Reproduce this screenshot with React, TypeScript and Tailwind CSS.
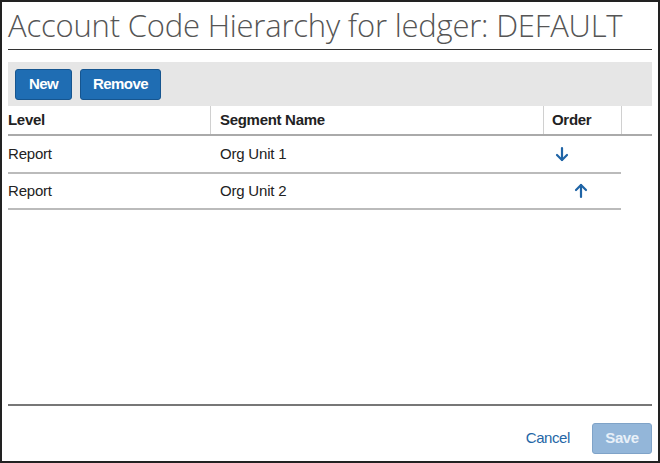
import React from "react";

const rows = [
	{ level: "Report", segment: "Org Unit 1", dir: "down" },
	{ level: "Report", segment: "Org Unit 2", dir: "up" },
];

const Arrow = ({ dir }: { dir: string }) => (
	<svg width="14" height="16" viewBox="0 0 14 16" fill="none" stroke="#1f64a6" strokeWidth="2.2" strokeLinecap="round" strokeLinejoin="round">
		{dir === "down" ? (
			<>
				<path d="M7 2v12" />
				<path d="M2 9l5 5 5-5" />
			</>
		) : (
			<>
				<path d="M7 14V2" />
				<path d="M2 7l5-5 5 5" />
			</>
		)}
	</svg>
);

const App = () => {
	return (
		<div className="w-[660px] h-[463px] bg-white border-2 border-[#222] flex flex-col font-['Liberation_Sans',Arial,sans-serif]">
			<h1 className="h-[47px] px-[6px] pt-[1px] text-[31px] leading-[44px] text-[#555] font-['Open_Sans',sans-serif] font-light tracking-[-0.2px] whitespace-nowrap">
				Account Code Hierarchy for ledger: DEFAULT
			</h1>
			<div className="mx-[6px] border-t border-[#333]" />

			<div className="mx-[6px] mt-[12px] h-[44px] bg-[#e6e6e6] flex items-center gap-2 px-[7px]">
				<button className="h-[31px] w-[57px] rounded-[3px] bg-[#1f6db3] border border-[#16558f] text-white text-[15px] font-bold tracking-[-0.6px]">
					New
				</button>
				<button className="h-[31px] w-[81px] rounded-[3px] bg-[#1f6db3] border border-[#16558f] text-white text-[15px] font-bold tracking-[-0.6px]">
					Remove
				</button>
			</div>

			<div className="mx-[6px] text-[15px] text-[#222]">
				<div className="flex h-[30px] border-b-2 border-[#aaa] font-bold">
					<div className="w-[202px] flex items-center tracking-[-0.3px]">Level</div>
					<div className="w-[333px] px-[9px] flex items-center border-l border-[#d0d0d0] tracking-[-0.3px]">Segment Name</div>
					<div className="w-[78px] px-[8px] flex items-center border-l border-[#d0d0d0] tracking-[-0.3px]">Order</div>
					<div className="flex-1 border-l border-[#d0d0d0]" />
				</div>
				{rows.map((r, i) => (
					<div key={i} className={`flex w-[613px] border-b-2 border-[#bbb] ${i === 0 ? "h-[38px]" : "h-[36px]"}`}>
						<div className="w-[202px] flex items-center tracking-[-0.2px]">{r.level}</div>
						<div className="w-[333px] px-[10px] flex items-center tracking-[-0.2px]">{r.segment}</div>
						<div className={`flex-1 flex items-center ${r.dir === "down" ? "pl-[12px]" : "pl-[31px]"}`}>
							<Arrow dir={r.dir} />
						</div>
					</div>
				))}
			</div>

			<div className="flex-1" />
			<div className="mx-[6px] border-t-2 border-[#777]" />
			<div className="h-[55px] flex items-center justify-end gap-[22px] pr-[6px] pt-[10px]">
				<button className="text-[15px] text-[#2566a6] tracking-[-0.4px]">Cancel</button>
				<button className="h-[31px] w-[60px] rounded-[3px] bg-[#93b6d9] border border-[#7fa3c8] text-[#e8f0f8] text-[15px] font-bold tracking-[-0.4px]">
					Save
				</button>
			</div>
		</div>
	);
};

export default App;
